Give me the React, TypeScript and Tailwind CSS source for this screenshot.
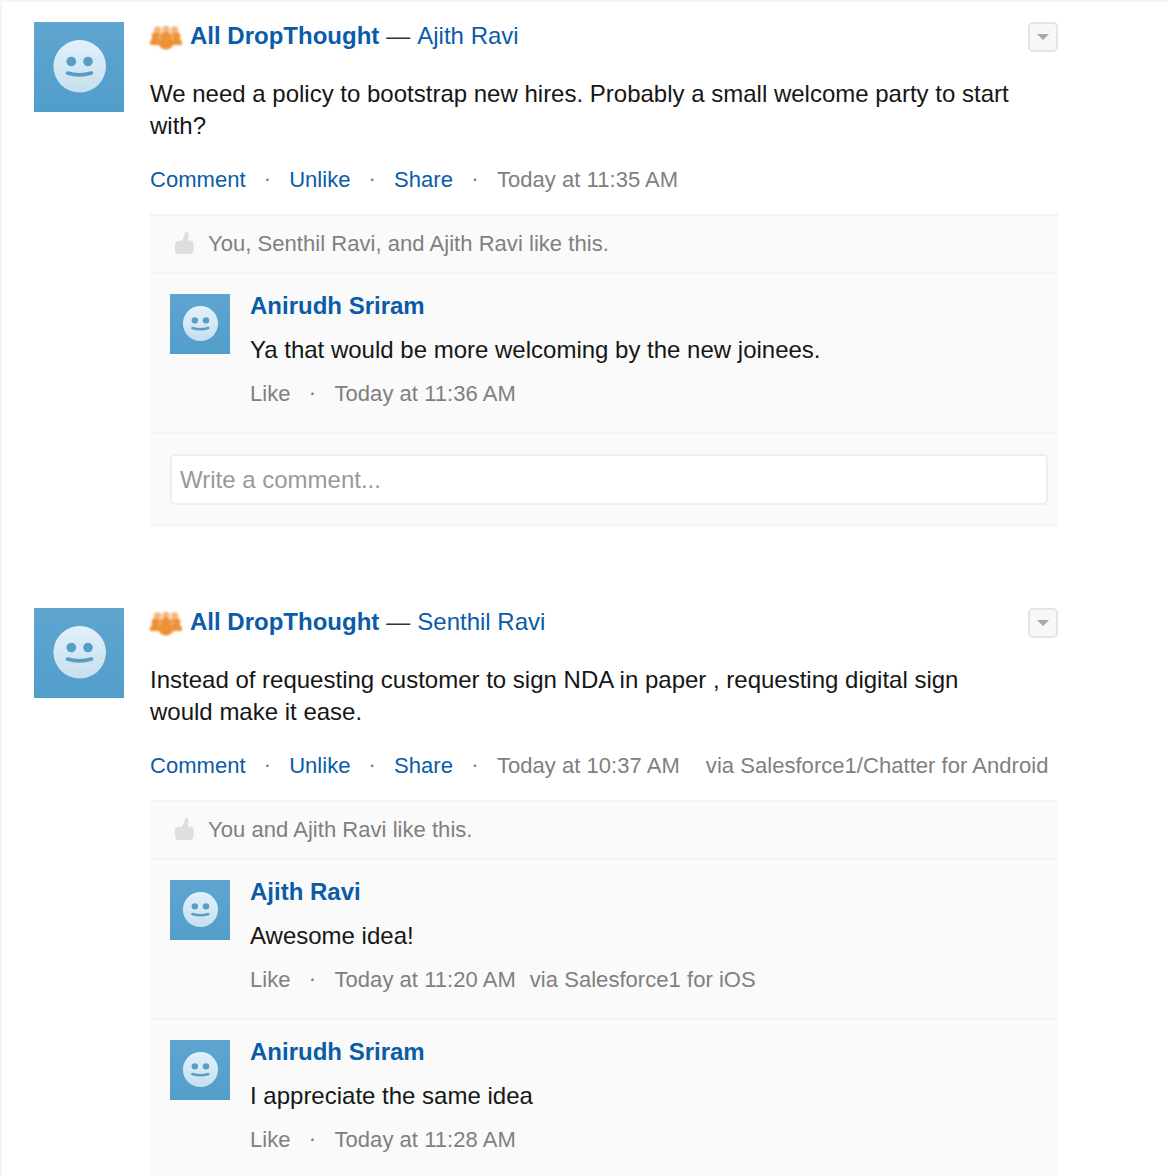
function Avatar({ size }: { size: 'lg' | 'sm' }) {
  const cls = size === 'lg' ? 'w-[90px] h-[90px]' : 'w-[60px] h-[60px]';
  return (
    <div className={`${cls} shrink-0 bg-gradient-to-b from-[#5fa5d0] to-[#519ecb]`}>
      <svg viewBox="0 0 90 90" className="w-full h-full">
        <defs>
          <linearGradient id="face" x1="0" y1="0" x2="0" y2="1">
            <stop offset="0" stopColor="#e2f1fc" />
            <stop offset="1" stopColor="#c6dfee" />
          </linearGradient>
        </defs>
        <circle cx="45.7" cy="44.3" r="26.3" fill="url(#face)" />
        <circle cx="37.3" cy="39.5" r="4.8" fill="#5b9cc4" />
        <circle cx="54" cy="39.5" r="4.8" fill="#5b9cc4" />
        <path d="M33.500 51c8 2.500 16 2.500 24 0" fill="none" stroke="#5b9cc4" strokeWidth="3.6" strokeLinecap="round" />
      </svg>
    </div>
  );
}

function GroupIcon() {
  return (
    <svg viewBox="0 0 32 25" className="w-8 h-[25px] shrink-0 blur-[0.8px]" fill="#ec9136">
      <circle cx="7.500" cy="5" r="3.800" fill="#f5b67c" />
      <circle cx="16" cy="4.500" r="3.800" fill="#f5b67c" />
      <circle cx="24.500" cy="5" r="3.800" fill="#f5b67c" />
      <path d="M3 8h26v7H3z" fill="#f2a55c" />
      <circle cx="5" cy="11" r="3.500" />
      <circle cx="27" cy="11" r="3.500" />
      <path d="M0 17c0-2 2.500-3.500 5-3.500s5 1.500 5 3.500v3H0zM22 17c0-2 2.500-3.500 5-3.500s5 1.500 5 3.500v3H22z" />
      <circle cx="16" cy="11" r="4.500" />
      <path d="M8.500 18c0-3 3-4.500 7.500-4.500s7.500 1.500 7.500 4.500c0 3.500-3 6.500-7.500 6.500s-7.500-3-7.500-6.500z" />
    </svg>
  );
}

function ThumbIcon() {
  return (
    <svg viewBox="0 0 20 24" className="w-5 h-6 shrink-0 blur-[0.5px]" fill="#dcdedf">
      <path d="M1 13c0-2 1-3 3-3h3c2-1 3-5 4-8 .5-2 3-1.500 3.500.5.500 2-.5 5-.5 7h3c1.500 0 2.500 1 2.500 2.500V19c0 2.500-1.500 4-4 4H5c-2.500 0-4-1.500-4-4z" />
    </svg>
  );
}

function Dot({ className }: { className: string }) {
  return <span className={`text-[#777] text-[22px] leading-none text-center ${className}`}>·</span>;
}

interface Reply {
  name: string;
  text: string;
  time: string;
  via?: string;
}

interface Post {
  group: string;
  author: string;
  lines: string[];
  time: string;
  via?: string;
  likes: string;
  replies: Reply[];
  commentBox?: boolean;
}

const posts: Post[] = [
  {
    group: 'All DropThought',
    author: 'Ajith Ravi',
    lines: ['We need a policy to bootstrap new hires. Probably a small welcome party to start', 'with?'],
    time: 'Today at 11:35 AM',
    likes: 'You, Senthil Ravi, and Ajith Ravi like this.',
    replies: [{ name: 'Anirudh Sriram', text: 'Ya that would be more welcoming by the new joinees.', time: 'Today at 11:36 AM' }],
    commentBox: true,
  },
  {
    group: 'All DropThought',
    author: 'Senthil Ravi',
    lines: ['Instead of requesting customer to sign NDA in paper , requesting digital sign', 'would make it ease.'],
    time: 'Today at 10:37 AM',
    via: 'via Salesforce1/Chatter for Android',
    likes: 'You and Ajith Ravi like this.',
    replies: [
      { name: 'Ajith Ravi', text: 'Awesome idea!', time: 'Today at 11:20 AM', via: 'via Salesforce1 for iOS' },
      { name: 'Anirudh Sriram', text: 'I appreciate the same idea', time: 'Today at 11:28 AM' },
    ],
  },
];

function ReplyRow({ reply }: { reply: Reply }) {
  return (
    <div className="flex gap-5 pl-5 pt-5 h-[160px] border-b-2 border-[#f3f3f3]">
      <Avatar size="sm" />
      <div>
        <div className="text-[24px] leading-6 font-bold text-[#0b5ca8]">{reply.name}</div>
        <div className="mt-5 text-[24px] leading-6 text-[#161616]">{reply.text}</div>
        <div className="mt-[19px] flex items-center h-6 text-[22px] tracking-[0.04px] text-[#808080]">
          <span>Like</span>
          <Dot className="w-[44px]" />
          <span>{reply.time}</span>
          {reply.via && <span className="ml-[14px]">{reply.via}</span>}
        </div>
      </div>
    </div>
  );
}

function FeedPost({ post }: { post: Post }) {
  return (
    <div className="flex gap-[26px] pl-[34px] w-[1058px]">
      <Avatar size="lg" />
      <div className="flex-1 min-w-0">
        <div className="flex items-center h-[30px] text-[24px]">
          <GroupIcon />
          <div className="flex -translate-y-px">
            <span className="ml-2 font-bold text-[#0b5ca8]">{post.group}</span>
            <span className="ml-[7px] text-[#333]">—</span>
            <span className="ml-[7px] text-[#0b5ca8]">{post.author}</span>
          </div>
          <button className="ml-auto w-[30px] h-[30px] rounded-[5px] border-2 border-[#e4e4e4] bg-[#f7f7f7] flex items-center justify-center">
            <span className="w-0 h-0 border-x-[6px] border-x-transparent border-t-[6px] border-t-[#a8a8a8]" />
          </button>
        </div>
        <div className="mt-[26px] text-[24px] leading-8 text-[#161616]">
          {post.lines.map(l => (
            <div key={l}>{l}</div>
          ))}
        </div>
        <div className="mt-[21px] mb-[19px] flex items-center h-8 text-[22px] tracking-[0.04px] whitespace-nowrap">
          <span className="text-[#0b5ca8]">Comment</span>
          <Dot className="w-[43.5px]" />
          <span className="text-[#0b5ca8]">Unlike</span>
          <Dot className="w-[43.5px]" />
          <span className="text-[#0b5ca8]">Share</span>
          <Dot className="w-[44px]" />
          <span className="text-[#808080]">{post.time}</span>
          {post.via && <span className="ml-[26px] text-[#808080]">{post.via}</span>}
        </div>
        <div className="bg-[#fafafa]">
          <div className="flex items-center gap-[14px] pl-[24px] pb-[2px] h-[60px] border-y-2 border-[#f3f3f3] text-[22px] tracking-[0.04px] text-[#808080]">
            <ThumbIcon />
            <span>{post.likes}</span>
          </div>
          {post.replies.map(r => (
            <ReplyRow key={r.name} reply={r} />
          ))}
          {post.commentBox && (
            <div className="pl-5 pr-[10px] pt-5 h-[92px] border-b-2 border-[#f3f3f3]">
              <div className="h-[51px] bg-white border-2 border-[#eeeeee] rounded-[5px] flex items-center pl-2 text-[24px] text-[#999]">
                Write a comment...
              </div>
            </div>
          )}
        </div>
      </div>
    </div>
  );
}

export default function App() {
  return (
    <div className="h-[1176px] overflow-hidden bg-white border-l-2 border-t-2 border-[#f5f5f5] pt-5 font-['Liberation_Sans',Arial,sans-serif]">
      <div className="-ml-[2px] flex flex-col gap-[82px]">
        {posts.map(p => (
          <FeedPost key={p.author} post={p} />
        ))}
      </div>
    </div>
  );
}
